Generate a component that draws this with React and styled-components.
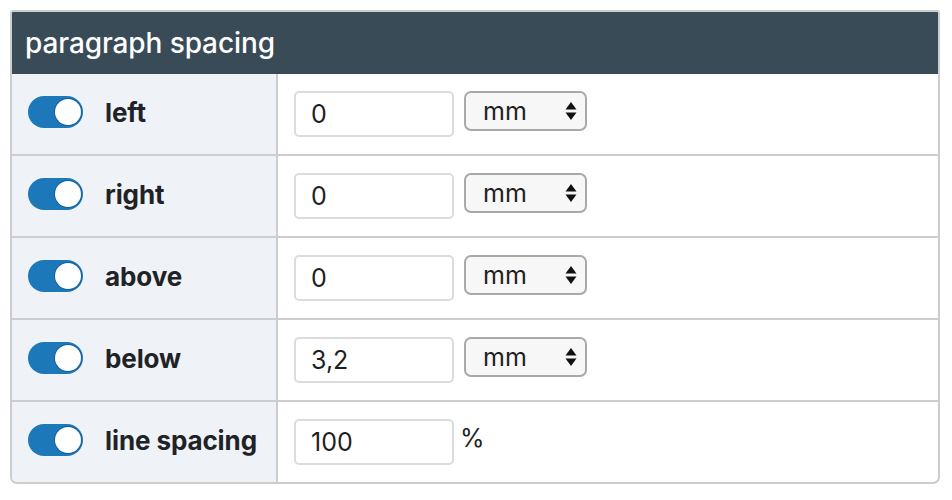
import React, { Component } from 'react'
import styled, { createGlobalStyle } from 'styled-components'

const GlobalStyle = createGlobalStyle`
  html, body {
    margin: 0;
    padding: 0;
    background: #ffffff;
  }

  body {
    font-family: Inter, "Noto Sans", "Liberation Sans", sans-serif;
  }
`;

const Panel = styled.div`
  margin: 10px 0 0 10px;
  width: 930px;
  box-sizing: border-box;
  border: 2px solid #cdcdcd;
  border-radius: 3px 3px 7px 7px;
  overflow: hidden;
`;

const Header = styled.div`
  height: 62px;
  padding: 0 13px;
  display: flex;
  align-items: center;
  background-color: #3a4b58;
  color: #ffffff;
  font-size: 28px;
  font-weight: 500;
  letter-spacing: -0.1px;
`;

const Row = styled.div`
  display: grid;
  grid-template-columns: 266px 1fr;
  height: 82px;
  box-sizing: border-box;
  border-bottom: 2px solid #cdcdcd;

  &:last-child {
    height: 80px;
    border-bottom: none;
  }
`;

const LabelCell = styled.div`
  display: flex;
  align-items: center;
  padding: 0 0 4px 16px;
  background-color: #eff2f7;
  border-right: 2px solid #cdcdcd;
`;

const Toggle = styled.div`
  position: relative;
  width: 55px;
  height: 32px;
  border-radius: 16px;
  background-color: #1d78b9;
  flex-shrink: 0;

  &::after {
    content: '';
    position: absolute;
    top: 3px;
    right: 2px;
    width: 26px;
    height: 26px;
    border-radius: 50%;
    background: #ffffff;
    box-shadow: 0 0 0 1px #16609a;
  }
`;

const Label = styled.span`
  margin-left: 22px;
  font-size: 26px;
  font-weight: 700;
  color: #1f2326;
  letter-spacing: -0.1px;
`;

const ValueCell = styled.div`
  display: flex;
  align-items: flex-start;
  gap: 10px;
  padding: 17px 0 0 16px;
`;

const NumberInput = styled.div`
  width: 160px;
  height: 46px;
  box-sizing: border-box;
  border: 2px solid #dcdcdc;
  border-radius: 5px;
  padding: 0 15px;
  display: flex;
  align-items: center;
  font-size: 25px;
  color: #1f1f1f;
  background: #ffffff;
`;

const UnitSelect = styled.div`
  width: 123px;
  height: 40px;
  box-sizing: border-box;
  border: 2px solid #a9a9a9;
  border-radius: 7px;
  padding: 0 8px 0 17px;
  display: flex;
  align-items: center;
  justify-content: space-between;
  font-size: 25px;
  color: #1f1f1f;
  background: #f7f7f7;
`;

const Suffix = styled.span`
  margin: 4px 0 0 -4px;
  font-size: 25px;
  color: #1f1f1f;
`;

const Arrows = () => (
  <svg width="12" height="20" viewBox="0 0 12 20">
    <path d="M6 1 L11.5 8.5 L0.5 8.5 Z" fill="#111" />
    <path d="M6 19 L11.5 11.5 L0.5 11.5 Z" fill="#111" />
  </svg>
);

const rows = [
  { label: 'left', value: '0', unit: 'mm' },
  { label: 'right', value: '0', unit: 'mm' },
  { label: 'above', value: '0', unit: 'mm' },
  { label: 'below', value: '3,2', unit: 'mm' },
  { label: 'line spacing', value: '100', suffix: '%' },
];

class App extends Component {
  render() {
    return (
      <>
        <GlobalStyle />
        <Panel>
          <Header>paragraph spacing</Header>
          {rows.map(({ label, value, unit, suffix }) => (
            <Row key={label}>
              <LabelCell>
                <Toggle />
                <Label>{label}</Label>
              </LabelCell>
              <ValueCell>
                <NumberInput>{value}</NumberInput>
                {unit && (
                  <UnitSelect>
                    {unit}
                    <Arrows />
                  </UnitSelect>
                )}
                {suffix && <Suffix>{suffix}</Suffix>}
              </ValueCell>
            </Row>
          ))}
        </Panel>
      </>
    );
  }
}

export default App
